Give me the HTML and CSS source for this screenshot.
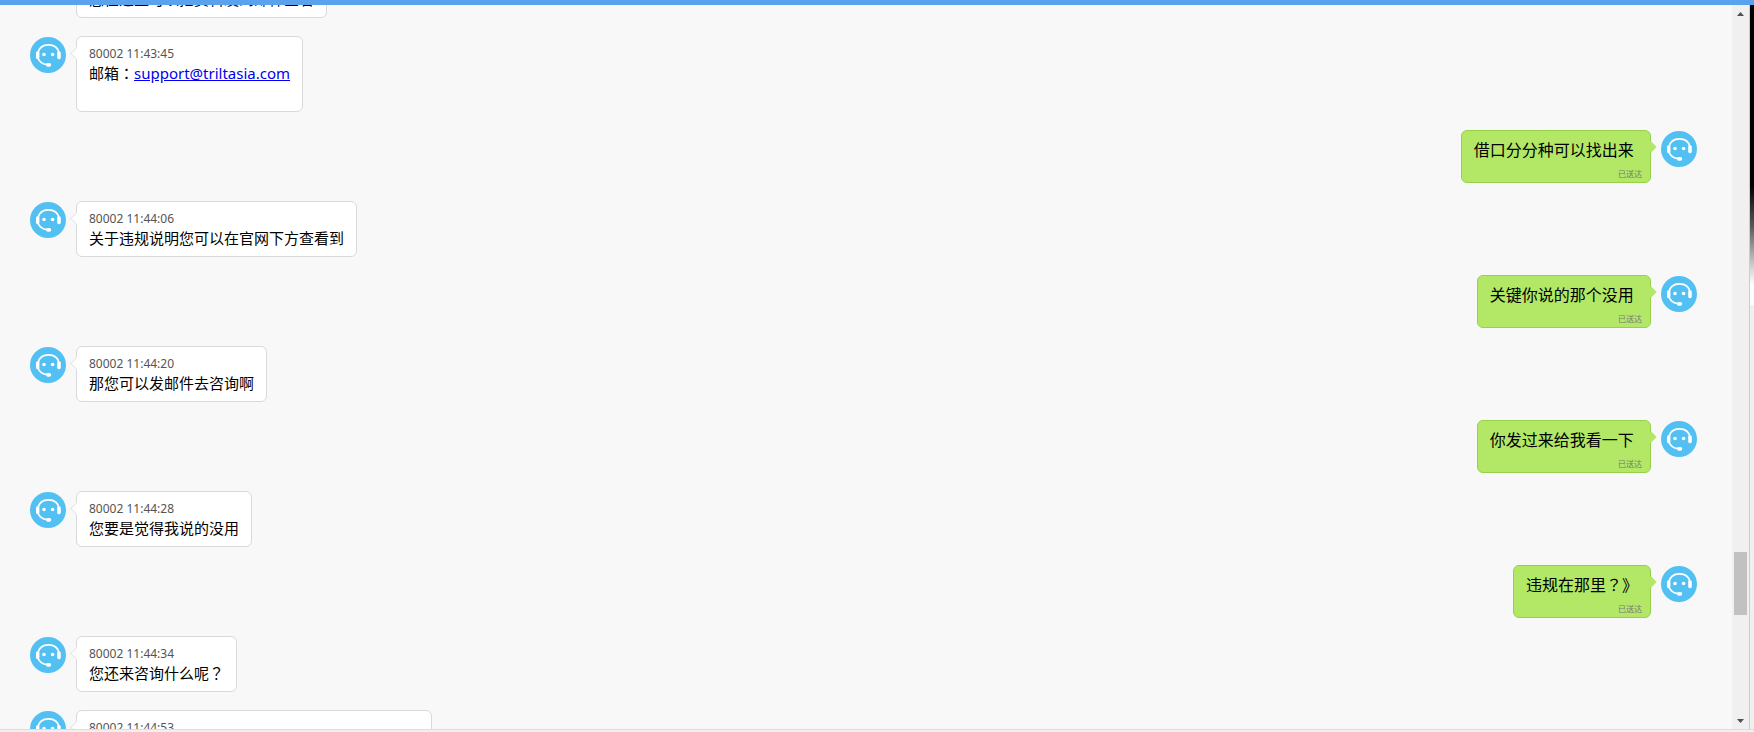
FILE: index.html
```
<!DOCTYPE html>
<html lang="zh-CN">
<head>
    <meta charset="UTF-8">
    <title>客服聊天记录</title>
    <link rel="stylesheet" href="styles.css">
</head>
<body>
<!-- 客服头像 -->
<svg class="sprite" aria-hidden="true">
    <symbol id="avatar" viewBox="0 0 36 36">
        <circle cx="18" cy="18" r="18" fill="#52c0f2"/>
        <path d="M8 16C9 10.500 13 7.800 18.500 7.800S28 10.500 29 16" fill="none" stroke="#fff" stroke-width="1.700"/>
        <rect x="6" y="14.200" width="3.400" height="8" rx="1.600" fill="#fff"/>
        <rect x="27.200" y="14.200" width="3.600" height="8" rx="1.600" fill="#fff"/>
        <path d="M8 21C9.500 25 12.500 27.300 17 27.700" fill="none" stroke="#fff" stroke-width="1.700"/>
        <rect x="16" y="26" width="5.200" height="3.800" rx="1.800" fill="#fff"/>
        <circle cx="14" cy="17.500" r="1.800" fill="#fff"/>
        <circle cx="22.600" cy="17.500" r="1.800" fill="#fff"/>
    </symbol>
</svg>
<div class="topbar"></div>
<div class="main">
    <div class="chat">
        <ul class="chat-list">
            <li>
                <svg class="avatar"><use href="#avatar"/></svg>
                <div class="bubble">
                    <p class="time">80002 11:43:30</p>
                    <p class="text">您在这里可以把资料发到邮件查看</p>
                </div>
            </li>
            <li>
                <svg class="avatar"><use href="#avatar"/></svg>
                <div class="bubble">
                    <p class="time">80002 11:43:45</p>
                    <p class="text">邮箱<span class="punc" lang="zh-TW">：</span><a href="mailto:support@triltasia.com">support@triltasia.com</a><br>&nbsp;</p>
                </div>
            </li>
            <li class="me">
                <svg class="avatar"><use href="#avatar"/></svg>
                <div class="bubble">
                    <p class="text">借口分分种可以找出来&nbsp;</p>
                    <p class="status">已送达</p>
                </div>
            </li>
            <li>
                <svg class="avatar"><use href="#avatar"/></svg>
                <div class="bubble">
                    <p class="time">80002 11:44:06</p>
                    <p class="text">关于违规说明您可以在官网下方查看到</p>
                </div>
            </li>
            <li class="me">
                <svg class="avatar"><use href="#avatar"/></svg>
                <div class="bubble">
                    <p class="text">关键你说的那个没用&nbsp;</p>
                    <p class="status">已送达</p>
                </div>
            </li>
            <li>
                <svg class="avatar"><use href="#avatar"/></svg>
                <div class="bubble">
                    <p class="time">80002 11:44:20</p>
                    <p class="text">那您可以发邮件去咨询啊</p>
                </div>
            </li>
            <li class="me">
                <svg class="avatar"><use href="#avatar"/></svg>
                <div class="bubble">
                    <p class="text">你发过来给我看一下&nbsp;</p>
                    <p class="status">已送达</p>
                </div>
            </li>
            <li>
                <svg class="avatar"><use href="#avatar"/></svg>
                <div class="bubble">
                    <p class="time">80002 11:44:28</p>
                    <p class="text">您要是觉得我说的没用</p>
                </div>
            </li>
            <li class="me">
                <svg class="avatar"><use href="#avatar"/></svg>
                <div class="bubble">
                    <p class="text">违规在那里<span class="punc" lang="zh-TW">？</span>》</p>
                    <p class="status">已送达</p>
                </div>
            </li>
            <li>
                <svg class="avatar"><use href="#avatar"/></svg>
                <div class="bubble">
                    <p class="time">80002 11:44:34</p>
                    <p class="text">您还来咨询什么呢<span class="punc" lang="zh-TW">？</span></p>
                </div>
            </li>
            <li>
                <svg class="avatar"><use href="#avatar"/></svg>
                <div class="bubble bubble-long">
                    <p class="time">80002 11:44:53</p>
                    <p class="text">&nbsp;</p>
                </div>
            </li>
        </ul>
    </div>
    <div class="scrollbar">
        <button class="arrow" type="button" aria-label="向上滚动"><svg width="7" height="4"><path d="M0 4L3.500 0L7 4z"/></svg></button>
        <div class="track"><div class="thumb"></div></div>
        <button class="arrow" type="button" aria-label="向下滚动"><svg width="7" height="4"><path d="M0 0L3.500 4L7 0z"/></svg></button>
    </div>
    <div class="edge"></div>
</div>
<div class="bottom"></div>
</body>
</html>
```
FILE: styles.css
```
* {
    margin: 0;
    padding: 0;
    box-sizing: border-box;
}

body {
    display: flex;
    flex-direction: column;
    height: 100vh;
    overflow: hidden;
    background-color: #f8f8f8;
    color: #000;
    font-family: "Noto Sans", "Noto Sans CJK SC", sans-serif;
}

ul {
    list-style: none;
}

.sprite {
    display: none;
}

.topbar {
    flex: none;
    height: 5px;
    background-color: #5ba2ee;
}

.main {
    display: flex;
    flex: 1;
    min-height: 0;
}

/* 聊天内容 */
.chat {
    flex: 1;
    overflow: hidden;
    padding: 0 35px 0 30px;
}

.chat-list {
    display: flex;
    flex-direction: column;
    gap: 18px;
    margin-top: -43px; /*第一条消息已经滚出去一部分*/
}

.chat-list li {
    display: flex;
    align-items: flex-start;
    gap: 10px;
}

.chat-list .me {
    flex-direction: row-reverse;
}

.avatar {
    flex: none;
    width: 36px;
    height: 36px;
    margin-top: 1px;
}

.bubble {
    position: relative;
    padding: 7px 12px 8px;
    border: 1px solid #d9d9d9;
    border-radius: 6px;
    background-color: #fff;
}

.bubble-long {
    width: 356px;
}

/* 气泡的小三角 */
.bubble::before {
    content: "";
    position: absolute;
    top: 12px;
    left: -5px;
    width: 8px;
    height: 8px;
    border-left: 1px solid #e4e4e4;
    border-bottom: 1px solid #e4e4e4;
    background-color: #fff;
    transform: rotate(45deg);
}

.time {
    color: #555;
    font-size: 12px;
    line-height: 19px;
}

.text {
    font-size: 15px;
    line-height: 20px;
}

.text a {
    color: #00e;
}

/* 标点居中 */
.punc {
    font-family: "Noto Sans CJK TC", sans-serif;
    line-height: 1;
}

.me .bubble {
    padding: 7px 8px 2px 12px;
    border-color: #96d149;
    background-color: #b2e866;
}

.me .bubble::before {
    left: auto;
    right: -5px;
    border: 0;
    background-color: #b2e866;
}

.me .text {
    margin: 0 4px 6px 0;
    font-size: 16px;
    line-height: 24px;
}

.status {
    color: #777;
    font-size: 8px;
    line-height: 12px;
    text-align: right;
}

/* 滚动条 */
.scrollbar {
    display: flex;
    flex-direction: column;
    flex: none;
    width: 18px;
    border-right: 1px solid #ccc;
    background-color: #f0f0f0;
}

.arrow {
    display: flex;
    align-items: center;
    justify-content: center;
    height: 17px;
    border: 0;
    background-color: transparent;
    fill: #505050;
}

.track {
    display: flex;
    flex-direction: column;
    flex: 1;
    padding: 0 2px;
}

.track::before {
    content: "";
    flex: 530;
}

.track::after {
    content: "";
    flex: 97;
}

.thumb {
    height: 63px;
    background-color: #c1c1c1;
}

.edge {
    flex: none;
    width: 4px;
    background: linear-gradient(#000 180px, #555 220px, #ccc 260px, #fff 280px, #fff 300px, #f0f0f0 300px);
}

.bottom {
    flex: none;
    height: 3px;
    border-top: 1px solid #ddd;
    background-color: #f0f0f0;
}
```
